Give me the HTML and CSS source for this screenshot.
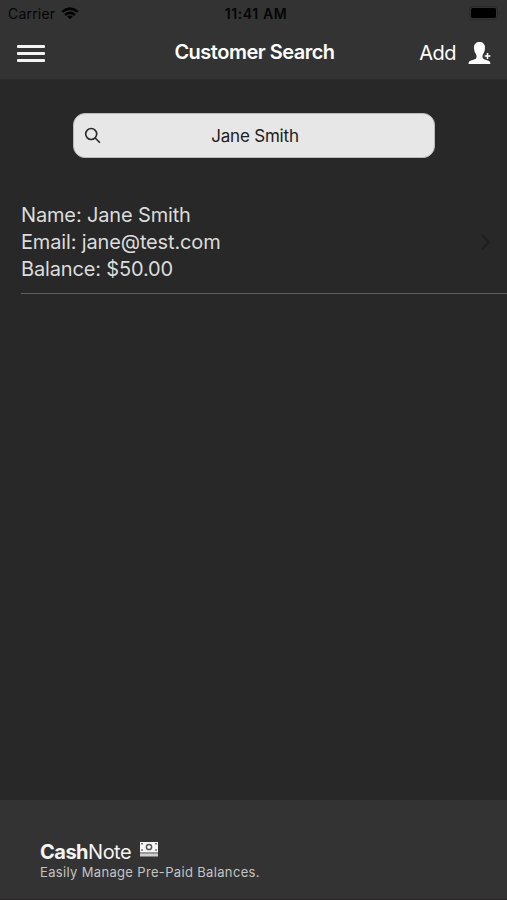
FILE: index.html
```html
<!DOCTYPE html>
<html lang="en">
<head>
<meta charset="utf-8">
<title>Customer Search</title>
<link rel="stylesheet" href="styles.css">
</head>
<body>
<div class="app">
  <header class="header">
    <div class="status">
      <div class="carrier"><span class="carrier-name">Carrier</span>
        <svg class="wifi" viewBox="0 0 18 13" width="18" height="13"><g fill="none" stroke="#000" stroke-width="2.5"><path d="M1.200 4.900Q9-1.600 16.800 4.900"/><path d="M4.100 8Q9 3.800 13.900 8"/></g><path d="M9 12.300 6.300 9.600Q9 7.600 11.700 9.600Z"/></svg>
      </div>
      <span class="time">11:41 AM</span>
      <svg class="battery" viewBox="0 0 33 17" width="33" height="17"><rect x="1.500" y="1.500" width="28" height="13" rx="3.500" fill="none" stroke="#292929"/><rect x="3" y="3" width="25" height="10" rx="1.800"/><path d="M31 6Q33 8 31 10Z" fill="#292929"/></svg>
    </div>
    <nav class="navbar">
      <button class="menu" aria-label="Menu"><i></i><i></i><i></i></button>
      <h1 class="title">Customer Search</h1>
      <button class="add"><span class="add-label">Add</span>
        <svg class="person" viewBox="0 0 24 24" width="24" height="24" fill="#fff"><path d="M11.500 1C8.200 1 6 3 6 6.500C6 9 6.700 11.500 8 13.200C8.700 14.200 8.800 16.500 8 17.400C7 18.500 2.800 19 1.500 20.300C.8 21 .6 22 .5 23H22.400C22.300 22 22.100 21 21.400 20.300C20 19 16 18.500 15 17.400C14.200 16.500 14.300 14.200 15 13.200C16.300 11.500 17 9 17 6.500C17 3 14.800 1 11.500 1Z"/><path d="M18.700 12H20.300V14.200H22.400V15.800H20.300V18H18.700V15.800H16.600V14.200H18.700Z"/></svg>
      </button>
    </nav>
  </header>
  <main class="content">
    <div class="search">
      <svg class="glass" viewBox="0 0 18 18" width="18" height="18" fill="none" stroke="#292929" stroke-width="1.600"><circle cx="7.200" cy="7" r="5.500"/><path d="M11.200 11 15.900 15.800"/></svg>
      <span class="query">Jane Smith</span>
    </div>
    <section class="customer">
      <div class="details">
        <div class="name">Name: Jane Smith</div>
        <div class="email">Email: jane@test.com</div>
        <div class="balance">Balance: $50.00</div>
      </div>
      <svg class="chevron" viewBox="0 0 12 18" width="12" height="18" fill="none" stroke="#1f1f1f" stroke-width="2.200"><path d="M2 2 9 9 2 16"/></svg>
    </section>
  </main>
  <footer class="footer">
    <div class="brand"><span class="logo"><b>Cash</b>Note</span>
      <svg class="cash" viewBox="0 0 18 15" width="18" height="15"><path fill="#f5f5f5" d="M0 0H18V10H0Z"/><path fill="#999" d="M0 10H18V12H0Z"/><path fill="#d0d0d0" d="M0 12H18V14.500H0Z"/><circle cx="9" cy="5" r="2.600" fill="#fff" stroke="#555" stroke-width="1.500"/><path fill="#777" d="M1 1H3V2.500H1ZM15 1H17V2.500H15ZM1 7.300H3V8.800H1ZM15 7.300H17V8.800H15Z"/></svg>
    </div>
    <div class="tagline">Easily Manage Pre-Paid Balances.</div>
  </footer>
</div>
</body>
</html>
```

FILE: styles.css
```css
* { box-sizing: border-box; }
body { margin: 0; background: #282828; font-family: Inter, "Liberation Sans", sans-serif; }
svg { display: block; flex: none; }
button { border: 0; padding: 0; background: none; font: inherit; color: inherit; }
.app { height: 900px; display: flex; flex-direction: column; overflow: hidden; }
.header { height: 80px; background: #333; border-bottom: 1px solid #2b2b2b; }
.status { height: 27px; display: grid; grid-template-columns: 1fr auto 1fr; align-items: center; padding: 0 6px 0 8px; color: #050505; font-size: 14px; line-height: 27px; }
.carrier { display: flex; align-items: center; gap: 6px; }
.carrier-name { letter-spacing: 0.2px; }
.time { font-weight: 600; letter-spacing: 0.6px; padding-left: 3px; }
.battery { justify-self: end; }
.navbar { height: 50px; display: grid; grid-template-columns: 1fr auto 1fr; align-items: center; padding: 0 15px 0 17px; color: #fff; }
.menu { width: 28px; display: flex; flex-direction: column; gap: 4px; margin-top: 1px; }
.menu i { height: 3px; border-radius: 1px; background: #f4f4f4; }
.title { margin: 0; font-size: 20px; font-weight: 600; line-height: 51px; letter-spacing: -0.5px; }
.add { justify-self: end; display: flex; align-items: center; gap: 12px; font-size: 20px; }
.add-label { letter-spacing: -0.5px; }
.content { flex: 1; padding-top: 33px; }
.search { width: 362px; height: 45px; margin-left: 73px; display: grid; grid-template-columns: 28px 1fr 28px; align-items: center; padding: 0 10px; border: 1px solid #bbb; border-radius: 12px; background: #e7e7e7; }
.query { padding-left: 2px; text-align: center; font-size: 17px; color: #202020; letter-spacing: -0.2px; }
.customer { margin: 44px 0 0 21px; height: 92px; display: flex; justify-content: space-between; align-items: flex-start; padding-right: 15px; border-bottom: 1px solid #606060; color: #dcdcdc; font-size: 20px; line-height: 27px; }
.chevron { margin-top: 31px; }
.name, .email, .balance { letter-spacing: -0.15px; }
.footer { height: 100px; padding: 40px 0 0 40px; background: #333; border-bottom: 1px solid #292529; }
.brand { display: flex; align-items: flex-start; gap: 9px; color: #f4f4f4; font-size: 20px; line-height: 24px; }
.cash { margin-top: 2px; }
.logo { letter-spacing: -0.5px; }
.tagline { color: #c4c4c4; font-size: 13px; line-height: 17px; letter-spacing: 0.34px; }
```
